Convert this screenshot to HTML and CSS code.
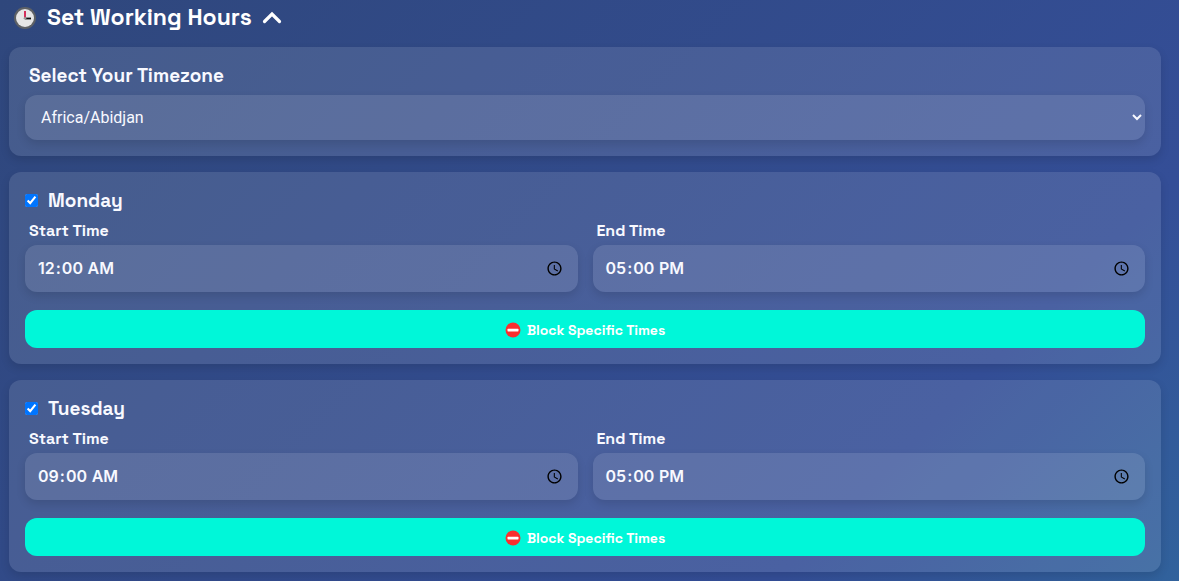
FILE: index.html
```html
<!DOCTYPE html>
<html lang="en">
<head>
<meta charset="utf-8">
<meta name="viewport" content="width=device-width, initial-scale=1">
<title>Set Working Hours</title>
<link rel="stylesheet" href="styles.css">
</head>
<body>
<main class="page">
  <h1 class="title">
    <button class="title-toggle" type="button" aria-expanded="true">
      <svg class="title-clock" viewBox="0 0 24 24" aria-hidden="true">
        <circle cx="12" cy="12" r="11" fill="#5e6165"/>
        <circle cx="12" cy="12" r="9" fill="#e6e6e6"/>
        <path d="M12 12V5" stroke="#d32f5b" stroke-width="2"/>
        <path d="M12 12.5h6" stroke="#111" stroke-width="1.8"/>
        <circle cx="12" cy="12.3" r="1.3" fill="#999"/>
      </svg>
      <span>Set Working Hours</span>
      <svg class="title-chevron" viewBox="0 0 20 14" aria-hidden="true">
        <path d="M2.5 10.5L10 3l7.500 7.500" fill="none" stroke="#fff" stroke-width="3.200" stroke-linecap="round"/>
      </svg>
    </button>
  </h1>

  <section class="card">
    <label class="card-label" for="timezone">Select Your Timezone</label>
    <select class="control zone" id="timezone">
      <option>Africa/Abidjan</option>
    </select>
  </section>

  <section class="card">
    <div class="day">
      <input class="day-check" type="checkbox" id="monday" checked>
      <label class="day-name" for="monday">Monday</label>
    </div>
    <div class="times">
      <div class="field">
        <label class="field-label" for="monday-start">Start Time</label>
        <input class="control time" type="time" id="monday-start" value="00:00">
      </div>
      <div class="field">
        <label class="field-label" for="monday-end">End Time</label>
        <input class="control time" type="time" id="monday-end" value="17:00">
      </div>
    </div>
    <button class="block" type="button">
      <svg class="block-icon" viewBox="0 0 16 16" aria-hidden="true">
        <circle cx="8" cy="8" r="7.5" fill="#f92f2f"/>
        <rect x="2.5" y="6.8" width="11" height="2.6" rx=".6" fill="#fff"/>
      </svg>
      Block Specific Times
    </button>
  </section>

  <section class="card">
    <div class="day">
      <input class="day-check" type="checkbox" id="tuesday" checked>
      <label class="day-name" for="tuesday">Tuesday</label>
    </div>
    <div class="times">
      <div class="field">
        <label class="field-label" for="tuesday-start">Start Time</label>
        <input class="control time" type="time" id="tuesday-start" value="09:00">
      </div>
      <div class="field">
        <label class="field-label" for="tuesday-end">End Time</label>
        <input class="control time" type="time" id="tuesday-end" value="17:00">
      </div>
    </div>
    <button class="block" type="button">
      <svg class="block-icon" viewBox="0 0 16 16" aria-hidden="true">
        <circle cx="8" cy="8" r="7.5" fill="#f92f2f"/>
        <rect x="2.5" y="6.8" width="11" height="2.6" rx=".6" fill="#fff"/>
      </svg>
      Block Specific Times
    </button>
  </section>
</main>
</body>
</html>
```
FILE: styles.css
```css
* {
  box-sizing: border-box;
}

html {
  min-height: 100%;
  background: linear-gradient(135deg, #2f477c 0%, #344e97 77%, #31629c 100%);
}

body {
  margin: 0;
  color: #f8f9ff;
  font-family: "Space Grotesk", Inter, sans-serif;
  font-size: 16px;
}

.page {
  display: flex;
  flex-direction: column;
  gap: 16px;
  padding: 4px 18px 9px 9px;
}

.title {
  margin: 0;
  font-size: 23px;
  line-height: 27px;
}

.title-toggle {
  display: flex;
  align-items: center;
  gap: 10px;
  padding: 0 0 0 4px;
  border: 0;
  background: none;
  color: #fff;
  font: inherit;
  font-weight: 700;
}

.title-clock {
  width: 24px;
  height: 24px;
}

.title-chevron {
  width: 20px;
  height: 14px;
}

.card {
  display: flex;
  flex-direction: column;
  padding: 16px;
  border-radius: 12px;
  background: rgba(255, 255, 255, 0.11);
  box-shadow: 0 4px 10px rgba(0, 0, 0, 0.12);
}

.card-label {
  padding-left: 4px;
  margin-bottom: 6px;
  font-size: 19px;
  font-weight: 700;
  line-height: 26px;
}

.control {
  width: 100%;
  border: 0;
  border-radius: 12px;
  background: rgba(255, 255, 255, 0.11);
  box-shadow: 0 4px 10px rgba(0, 0, 0, 0.12);
  color: inherit;
  font-family: Inter, sans-serif;
  font-size: 16px;
}

.zone {
  height: 45px;
  padding: 0 0 0 12px;
  font-family: Roboto, sans-serif;
}

.zone option {
  color: #222;
}

.day {
  display: flex;
  align-items: center;
  gap: 10px;
  line-height: 25px;
}

.day-check {
  width: 13px;
  height: 13px;
  margin: 0;
}

.day-name {
  font-size: 19px;
  font-weight: 700;
}

.times {
  display: grid;
  grid-template-columns: 1fr 1fr;
  gap: 15px;
  margin-bottom: 18px;
}

.field {
  display: flex;
  flex-direction: column;
}

.field-label {
  padding: 7px 4px 3px;
  font-size: 16px;
  font-weight: 700;
  line-height: 22px;
}

.time {
  height: 47px;
  padding: 0 12px;
  font-weight: 600;
}

.block {
  display: flex;
  align-items: center;
  justify-content: center;
  gap: 6px;
  height: 38px;
  padding: 2px 6px 0;
  border: 0;
  border-radius: 12px;
  background: #00f7d9;
  color: #fff;
  font-family: "Space Grotesk", Inter, sans-serif;
  font-size: 14px;
  font-weight: 700;
}

.block-icon {
  width: 16px;
  height: 16px;
}
```
